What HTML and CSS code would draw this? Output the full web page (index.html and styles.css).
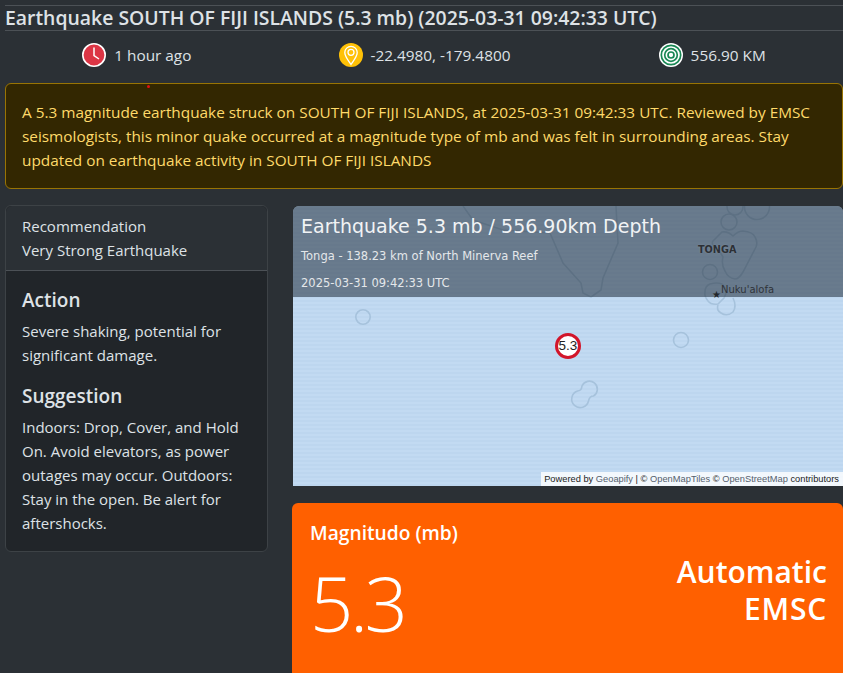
FILE: index.html
```html
<!DOCTYPE html>
<html lang="en">
<head>
<meta charset="utf-8">
<title>Earthquake SOUTH OF FIJI ISLANDS</title>
<link rel="stylesheet" href="styles.css">
</head>
<body>
<header class="title">
  <h1>Earthquake SOUTH OF FIJI ISLANDS (5.3 mb) (2025-03-31 09:42:33 UTC)</h1>
</header>
<section class="facts">
  <div class="fact">
    <svg class="ico" viewBox="0 0 24 24"><circle cx="12" cy="12" r="11.200" fill="#dc3545" stroke="#fff" stroke-width="1.600"/><path d="M12 4.500V12.500L17 16" fill="none" stroke="#fff" stroke-width="1.500"/></svg>
    <span>1 hour ago</span>
  </div>
  <div class="fact">
    <svg class="ico" viewBox="0 0 24 24"><circle cx="12" cy="12" r="12" fill="#ffc107"/><path d="M12 21.500C9 17 5.800 13.500 5.800 9.500a6.200 6.200 0 0 1 12.400 0C18.200 13.500 15 17 12 21.500Z" fill="none" stroke="#fff" stroke-width="1.300"/><circle cx="12" cy="9.300" r="3" fill="none" stroke="#fff" stroke-width="1.300"/></svg>
    <span>-22.4980, -179.4800</span>
  </div>
  <div class="fact">
    <svg class="ico" viewBox="0 0 24 24"><circle cx="12" cy="12" r="12" fill="#fff"/><circle cx="12" cy="12" r="9.700" fill="none" stroke="#198754" stroke-width="1.700"/><circle cx="12" cy="12" r="6.300" fill="none" stroke="#198754" stroke-width="1.700"/><circle cx="12" cy="12" r="3" fill="none" stroke="#198754" stroke-width="1.700"/></svg>
    <span>556.90 KM</span>
  </div>
</section>
<section class="alert">
  <i class="dot"></i>
  A 5.3 magnitude earthquake struck on SOUTH OF FIJI ISLANDS, at 2025-03-31 09:42:33 UTC. Reviewed by EMSC seismologists, this minor quake occurred at a magnitude type of mb and was felt in surrounding areas. Stay updated on earthquake activity in SOUTH OF FIJI ISLANDS
</section>
<main class="columns">
  <aside class="card">
    <div class="card-head">
      <div>Recommendation</div>
      <div>Very Strong Earthquake</div>
    </div>
    <div class="card-body">
      <h2>Action</h2>
      <p>Severe shaking, potential for significant damage.</p>
      <h2>Suggestion</h2>
      <p class="last">Indoors: Drop, Cover, and Hold On. Avoid elevators, as power outages may occur. Outdoors: Stay in the open. Be alert for aftershocks.</p>
    </div>
  </aside>
  <div class="right">
    <figure class="map">
      <svg class="land" viewBox="0 0 550 280" preserveAspectRatio="none">
        <g fill="none" stroke="#a6c2dc" stroke-width="1.600">
          <path d="M170 0L180 14L210 24L257 27L270 57L288 77L290 87L298 91L308 84L310 72L325 37L323 0"/>
          <path d="M420 35L429 26Q435 25 440 30Q445 25 450 25Q460 26 462 31Q465 36 463 41L450 66Q446 73 442 73Q435 72 432 65Q428 58 430 51Q426 44 422 41Q418 38 420 35Z"/>
          <circle cx="417" cy="66" r="7.500"/>
          <circle cx="436" cy="16" r="8"/>
          <circle cx="442" cy="1" r="8"/>
          <circle cx="464" cy="1" r="12.500"/>
          <path d="M412 86Q412 80 417 78Q424 76 429 78Q436 84 431 92L425 98Q418 99 415 95Q411 90 412 86Z"/>
          <path d="M425 99Q423 104 428 107Q434 111 440 106Q444 100 440 92"/>
          <circle cx="70" cy="111" r="7.200"/>
          <circle cx="388" cy="134" r="7.500"/>
          <path d="M289 180a8 8 0 1 1 11.500 10q-4 0 -5 5a8.500 8.500 0 1 1 -11 -10q4 0 4.500 -5Z"/>
        </g>
      </svg>
      <div class="map-shade">
        <div class="map-title">Earthquake 5.3 mb / 556.90km Depth</div>
        <div class="map-sub">Tonga - 138.23 km of North Minerva Reef</div>
        <div class="map-sub">2025-03-31 09:42:33 UTC</div>
      </div>
      <span class="place tonga">TONGA</span>
      <span class="place capital">Nuku'alofa</span>
      <span class="star">★</span>
      <span class="marker">5.3</span>
      <div class="attrib">Powered by <a>Geoapify</a> | © <a>OpenMapTiles</a> © <a>OpenStreetMap</a> contributors</div>
    </figure>
    <section class="mag">
      <div class="mag-left">
        <div class="mag-label">Magnitudo (mb)</div>
        <div class="mag-value">5.3</div>
      </div>
      <div class="mag-right">
        <div>Automatic</div>
        <div class="mag-source">EMSC</div>
      </div>
    </section>
  </div>
</main>
</body>
</html>
```
FILE: styles.css
```css
html { overflow: hidden; height: 100%; }
body {
  margin: 0;
  height: 673px;
  overflow: hidden;
  background: #2b3035;
  color: #dee2e6;
  font-family: "Open Sans", "Noto Sans", sans-serif;
  font-size: 16px;
  line-height: 24px;
}
.title {
  margin: 5px 0 0 5px;
  border-top: 1px solid #4c5156;
  border-bottom: 1px solid #4c5156;
  height: 24px;
}
.title h1 {
  margin: 0;
  font-size: 19.400px;
  font-weight: 600;
  line-height: 24px;
  white-space: nowrap;
}
.facts {
  display: grid;
  grid-template-columns: repeat(3, 1fr);
  margin: 0 -13px 0 -7px;
  height: 52px;
}
.fact {
  display: flex;
  align-items: center;
  justify-content: center;
  gap: 8px;
  font-size: 15.350px;
  height: 48px;
}
.ico { width: 24px; height: 24px; flex: none; }
.alert {
  position: relative;
  margin-left: 5px;
  padding: 16px;
  height: 72px;
  background: #332701;
  border: 1px solid #997404;
  border-radius: 6px;
  color: #ffda6a;
  font-size: 15.350px;
}
.dot {
  position: absolute;
  left: 141px;
  top: 1px;
  width: 3px;
  height: 3px;
  border-radius: 50%;
  background: #e01010;
}
.columns {
  display: grid;
  grid-template-columns: 263px 551px;
  column-gap: 24px;
  margin: 16px 0 0 5px;
  align-items: start;
}
.card {
  background: #212529;
  border: 1px solid #3d4246;
  border-radius: 6px;
  font-size: 15px;
}
.card-head {
  background: #2b3035;
  border-bottom: 1px solid #4c5156;
  border-radius: 6px 6px 0 0;
  padding: 8px 16px;
}
.card-body { padding: 17px 16px 15px; height: 248px; }
.card-body h2 {
  margin: 0 0 7px;
  font-size: 19px;
  font-weight: 600;
  line-height: 24px;
}
.card-body p { margin: 0 0 17px; }
.card-body p.last { margin: 0; }
.right { min-width: 0; }
.map {
  position: relative;
  margin: 1px 0 17px 1px;
  height: 280px;
  overflow: hidden;
  border-radius: 6px 6px 0 0;
  background: repeating-linear-gradient(180deg, #c2daf2 0, #c2daf2 2px, #bdd6ef 2px, #bdd6ef 4px);
}
.land { position: absolute; inset: 0; width: 100%; height: 100%; filter: blur(0.4px); }
.map-shade {
  position: absolute;
  left: 0;
  right: 0;
  top: 0;
  height: 91px;
  background: rgba(33, 45, 58, 0.55);
  color: #f1f3f5;
  font-family: "DejaVu Sans", sans-serif;
  padding-left: 8px;
}
.map-title { font-size: 19px; line-height: 22px; padding-top: 9px; }
.map-sub { font-size: 11.500px; line-height: 14px; margin-top: 13px; color: #e4e7ea; }
.map-title + .map-sub { margin-top: 12px; }
.place { position: absolute; font-family: "DejaVu Sans", sans-serif; color: #2c3036; font-size: 10px; line-height: 12px; }
.tonga { left: 405px; top: 38px; font-size: 9.700px; font-weight: 700; text-shadow: 0 0 2px #8290a0; }
.capital { left: 428px; top: 78px; color: #30343a; }
.star { position: absolute; left: 419px; top: 83px; font-size: 10px; line-height: 10px; color: #24282c; }
.marker {
  position: absolute;
  left: 262px;
  top: 127px;
  box-sizing: border-box;
  width: 26px;
  height: 26px;
  border: 3px solid #d2152a;
  border-radius: 50%;
  background: #fff;
  color: #222;
  font-family: "Liberation Sans", sans-serif;
  font-size: 13.500px;
  line-height: 20px;
  text-align: center;
}
.attrib {
  position: absolute;
  right: 0;
  bottom: 0;
  padding: 0 4px 0 3px;
  background: rgba(255, 255, 255, 0.8);
  color: #222;
  font-family: "Liberation Sans", sans-serif;
  font-size: 9.300px;
  line-height: 14px;
  white-space: nowrap;
}
.attrib a { color: #55606c; }
.mag {
  display: flex;
  justify-content: space-between;
  background: #ff6000;
  color: #fff;
  border-radius: 6px;
  padding: 16px 16px 0 18px;
  height: 200px;
}
.mag-label { font-size: 19.200px; font-weight: 600; line-height: 28px; }
.mag-value { font-size: 76px; font-weight: 300; line-height: 96px; margin-top: 8px; letter-spacing: -3.500px; }
.mag-right {
  text-align: right;
  font-size: 30px;
  font-weight: 600;
  line-height: 37px;
  padding-top: 34px;
}
.mag-source { letter-spacing: 0.800px; }
```
